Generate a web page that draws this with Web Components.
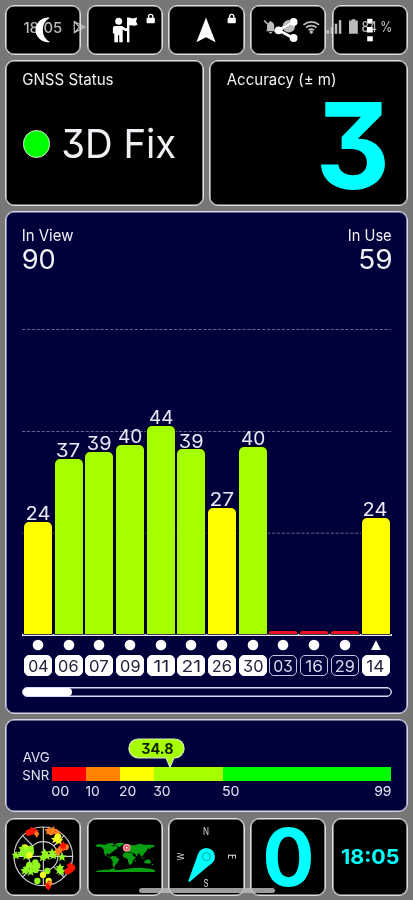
<!DOCTYPE html>
<html lang="en">
<head>
<meta charset="utf-8">
<title>GNSS Status</title>
<style>
    html, body { margin: 0; height: 100%; }
    body {
        background: #777775;
        font-family: Inter, "Liberation Sans", sans-serif;
        color: #f1f1f5;
    }
</style>
</head>
<body>
<gnss-app></gnss-app>

<script>
class BaseElement extends HTMLElement {

    constructor(){
        super();
        this.shadowObj = this.attachShadow({mode:'open'});
    }

    connectedCallback(){
        this.render();
    }

    render(){
        this.shadowObj.innerHTML = this.getTemplate() + this.getStyle();
    }

    getTemplate(){
        return '<slot></slot>';
    }

    getStyle(){
        return '';
    }

    num(name, fallback){
        return this.hasAttribute(name) ? parseFloat(this.getAttribute(name)) : fallback;
    }
}

// one line of text: "w" is the drawn width, "cap" the height of the capitals
class FitText extends BaseElement {

    getTemplate(){
        const text = this.getAttribute('text');
        const w = this.num('w', 20);
        const cap = this.num('cap', 11);
        const weight = this.getAttribute('weight') || 400;
        const size = cap / 0.727;

        const ctx = document.createElement('canvas').getContext('2d');
        ctx.font = `${weight} ${size * 10}px Inter, "Liberation Sans", sans-serif`;
        const m = ctx.measureText(text);
        const left = m.actualBoundingBoxLeft / 10;
        const ink = left + m.actualBoundingBoxRight / 10;

        return `
            <svg width="${w}" height="${cap}">
                <text x="${left}" y="${cap}" transform="scale(${w / ink} 1)"
                    font-size="${size}" font-weight="${weight}" fill="currentColor">${text}</text>
            </svg>
        `;
    }

    getStyle(){
        return `
        <style>
            :host { display: block; flex: none; }
            svg { display: block; overflow: visible; }
            text { font-feature-settings: "cv09"; }
        </style>
        `
    }
}

// bordered card, everything on the screen sits in one
class PanelCard extends BaseElement {

    getStyle(){
        return `
        <style>
            :host {
                display: flex;
                box-sizing: border-box;
                min-width: 0;
                border: 1px solid #dedee2;
                border-radius: 9px;
                background: #000;
                box-shadow: inset 0 0 0 .6px #dedee2;
            }
            :host([navy]) {
                border-color: #d6d6ea;
                background: #00003b;
                box-shadow: inset 0 0 0 .6px #d6d6ea;
            }
            :host([center]) { align-items: center; justify-content: center; }
        </style>
        `
    }
}

const LOCK = `
    <rect x="21.6" y="-12.2" width="8.2" height="5.4" rx=".8"/>
    <path d="M23.6-12v-1.6a2.1 2.1 0 0 1 4.2 0v1.6" fill="none" stroke="#fff" stroke-width="1.3"/>`;

// the origin of every icon is the centre of its tile
const ICONS = {
    moon: `<path d="M7-12.2A12.3 12.3 0 1 0 7 12A13.8 13.8 0 0 1 7-12.2z"/>`,
    guide: `
        <circle cx="-6.3" cy="-8.8" r="3.5"/>
        <path d="M-10.2-4h7.4l3.6 2.6 1.8-1v2.8l-2 .9-2.9-1.7V12.2h-3.5V5.2h-1.2v7h-3.7V3.6h-1.4v-5.8q0-1.8 1.9-1.8z"/>
        <path d="M2-12.6h2.3l3.4 1.1 4.6-1.1-1.2 3.8 1.4 3.6q-2.5 1.3-4.6.8-1.9-.8-3.5-.2V12.2H2z"/>${LOCK}`,
    arrow: `<path d="M0-12.6L9.6 12.2 0 7.3-9.6 12.2z"/>${LOCK}`,
    share: `
        <path d="M5.5-8.2L-9.3.3 5.5 8.2" fill="none" stroke="#fff" stroke-width="2.8"/>
        <circle cx="5.6" cy="-8" r="3.9"/><circle cx="-9.4" cy=".3" r="3.9"/><circle cx="5.6" cy="8" r="3.9"/>`,
    more: `
        <rect x="-2.8" y="-11.2" width="5.3" height="4.8"/>
        <rect x="-3" y="-3" width="5.8" height="5.5"/>
        <rect x="-2.8" y="6.3" width="5.6" height="5"/>`
};

class ToolIcon extends BaseElement {

    getTemplate(){
        return `<svg width="72" height="46" viewBox="-36 -23 72 46" fill="#fff">${ICONS[this.getAttribute('name')]}</svg>`;
    }

    getStyle(){
        return `
        <style>
            :host { display: block; }
            svg { display: block; }
        </style>
        `
    }
}

class FixStatus extends BaseElement {

    getTemplate(){
        return `
            <fit-text text="GNSS Status" w="90" cap="11.3"></fit-text>
            <div class="fix">
                <span class="lamp"></span>
                <fit-text text="3D Fix" w="112" cap="29.2"></fit-text>
            </div>
        `;
    }

    getStyle(){
        return `
        <style>
            :host { display: block; padding: 12.8px 16.8px; }
            .fix { display: flex; align-items: center; gap: 13px; margin-top: 44.3px; }
            .lamp {
                box-sizing: border-box;
                width: 27.5px;
                height: 27.5px;
                border: 1px solid #d8ecd8;
                border-radius: 50%;
                background: #00fe00;
            }
        </style>
        `
    }
}

class AccuracyView extends BaseElement {

    getTemplate(){
        return `
            <fit-text text="Accuracy (± m)" w="108" cap="11.3"></fit-text>
            <fit-text class="value" text="3" w="65" cap="87" weight="700"></fit-text>
        `;
    }

    getStyle(){
        return `
        <style>
            :host { display: flex; flex: 1; flex-direction: column; padding: 12.8px 20.8px 0 17px; }
            .value { align-self: flex-end; margin-top: 17.2px; color: #00ffff; }
        </style>
        `
    }
}

const SATS = [
    {id: '04', w: 18.5, snr: 24, h: 112.5},
    {id: '06', w: 18.5, snr: 37, h: 175.5},
    {id: '07', w: 18, snr: 39, h: 182.3},
    {id: '09', w: 18.5, snr: 40, h: 189.2},
    {id: '11', w: 13.5, snr: 44, h: 208},
    {id: '21', w: 16.5, snr: 39, h: 184.6},
    {id: '26', w: 18, snr: 27, h: 126},
    {id: '30', w: 18.5, snr: 40, h: 187},
    {id: '03', w: 18, h: 3},
    {id: '16', w: 16, h: 3},
    {id: '29', w: 18, h: 3},
    {id: '14', w: 16.5, snr: 24, h: 116.5, other: true}
];

class SatBar extends BaseElement {

    getTemplate(){
        const snr = this.getAttribute('snr');
        const color = !snr ? '#e81226' : snr < 30 ? '#ffff00' : '#a6ff00';
        return `
            ${snr ? `<fit-text text="${snr}" w="22.3" cap="13.4"></fit-text>` : ''}
            <div class="bar" style="height:${this.num('h', 0)}px;background:${color}"></div>
        `;
    }

    getStyle(){
        return `
        <style>
            :host {
                display: flex;
                flex-direction: column;
                align-items: center;
                justify-content: flex-end;
                gap: 1.6px;
                color: #e9e9f8;
            }
            .bar {
                width: 28px;
                border-radius: 5px 5px 0 0;
                box-shadow: 0 0 0 .8px #000014;
            }
            :host(:not([snr])) .bar { border-radius: 2px 2px 0 0; }
        </style>
        `
    }
}

class SatTag extends BaseElement {

    getTemplate(){
        const other = this.hasAttribute('other');
        return `
            <svg width="12" height="12" viewBox="-6 -6 12 12" fill="#fff">
                ${other ? '<path d="M0-4.8L5 5H-5z"/>' : '<circle r="5.3"/>'}
            </svg>
            <div class="tag"><fit-text text="${this.getAttribute('sat')}" w="${this.num('w', 18)}" cap="11.8"></fit-text></div>
        `;
    }

    getStyle(){
        return `
        <style>
            :host {
                display: flex;
                flex-direction: column;
                align-items: center;
                gap: 4.5px;
            }
            svg { display: block; }
            .tag {
                box-sizing: border-box;
                display: flex;
                align-items: center;
                justify-content: center;
                width: 28px;
                height: 21px;
                border: 1px solid #fff;
                border-radius: 5px;
                background: #fff;
                color: #22223c;
            }
            :host([idle]) .tag { border-color: #c4c4e0; background: none; color: #d8d8ee; }
        </style>
        `
    }
}

class SatChart extends BaseElement {

    getTemplate(){
        const bars = SATS.map(s => `<sat-bar ${s.snr ? `snr="${s.snr}"` : ''} h="${s.h}"></sat-bar>`).join('');
        const tags = SATS.map(s => `<sat-tag sat="${s.id}" w="${s.w}" ${s.snr ? '' : 'idle'} ${s.other ? 'other' : ''}></sat-tag>`).join('');
        return `
            <header>
                <div>
                    <fit-text text="In View" w="50" cap="11.5"></fit-text>
                    <fit-text text="90" w="31.3" cap="19.2"></fit-text>
                </div>
                <div class="right">
                    <fit-text text="In Use" w="42" cap="11.5"></fit-text>
                    <fit-text text="59" w="31" cap="19.2"></fit-text>
                </div>
            </header>
            <div class="plot">
                <svg class="lines" width="369" height="305">
                    <path d="M0 .5H369M0 102.5H369M0 204.2H369"/>
                </svg>
                <div class="bars">${bars}</div>
            </div>
            <div class="tags">${tags}</div>
            <div class="scroll"><span></span></div>
        `;
    }

    getStyle(){
        return `
        <style>
            :host { display: flex; flex: 1; flex-direction: column; padding: 17.3px 15.5px 0 16px; }
            header { display: flex; justify-content: space-between; height: 99.7px; padding: 0 1px 0 .8px; }
            header div { display: flex; flex-direction: column; gap: 8.9px; }
            .right { align-items: flex-end; }
            .plot { display: grid; height: 304.7px; border-bottom: 2px solid #ececf8; }
            .plot > * { grid-area: 1 / 1; }
            .lines { stroke: #62628e; stroke-width: 1; stroke-dasharray: 3.2 1.7; }
            .bars, .tags {
                display: grid;
                grid-template-columns: repeat(12, 30.7px);
                padding-left: .6px;
            }
            .tags { margin-top: 2.8px; }
            .scroll {
                box-sizing: border-box;
                height: 10px;
                margin-top: 11px;
                border: 1px solid #dcdcf0;
                border-radius: 5px;
                box-shadow: inset 0 0 0 .4px #dcdcf0;
            }
            .scroll span { display: block; width: 49px; height: 8px; border-radius: 4px; background: #fff; }
        </style>
        `
    }
}

class SnrScale extends BaseElement {

    getTemplate(){
        return `
            <div class="title">
                <fit-text text="AVG" w="26" cap="9.8"></fit-text>
                <fit-text text="SNR" w="26" cap="9.8"></fit-text>
            </div>
            <div class="scale">
                <svg class="bubble" width="58" height="31" viewBox="0 0 58 31">
                    <path d="M10.3 1H46.7A9.4 9.4 0 0 1 46.7 19.8H46L42 29.2 38 19.8H10.3A9.4 9.4 0 0 1 10.3 1z"/>
                </svg>
                <fit-text class="avg" text="34.8" w="31" cap="10.6" weight="700"></fit-text>
                <div class="segments"><i></i><i></i><i></i><i></i><i></i></div>
                <div class="marks">
                    <fit-text text="00" w="16.5" cap="10"></fit-text>
                    <fit-text text="10" w="13" cap="10"></fit-text>
                    <fit-text text="20" w="15.5" cap="10"></fit-text>
                    <fit-text text="30" w="15.8" cap="10"></fit-text>
                    <fit-text text="50" w="15.8" cap="10"></fit-text>
                    <fit-text text="99" w="15.8" cap="10"></fit-text>
                </div>
            </div>
        `;
    }

    getStyle(){
        return `
        <style>
            :host { display: flex; flex: 1; gap: 3.2px; padding: 0 15.8px 0 16.6px; color: #e4e4f4; }
            .title { display: flex; flex-direction: column; gap: 7.6px; padding-top: 32.4px; }
            .scale { position: relative; width: 339px; padding-top: 47.6px; }
            .segments { display: grid; grid-template-columns: 34px 34px 34px 69px 168px; height: 13.5px; }
            .segments i:nth-child(1) { background: #ff0000; }
            .segments i:nth-child(2) { background: #ff8200; }
            .segments i:nth-child(3) { background: #ffff00; }
            .segments i:nth-child(4) { background: #a6ff00; }
            .segments i:nth-child(5) { background: #00ff00; }
            .marks {
                display: grid;
                grid-template-columns: 34px 34px 34px 69px 1fr auto;
                margin-top: 4.6px;
                padding-left: .4px;
            }
            .bubble { position: absolute; left: 76.5px; top: 17.8px; fill: #a6ff00; stroke: #d9efb9; stroke-width: 1.2; }
            .avg { position: absolute; left: 89.8px; top: 23px; color: #10200a; }
        </style>
        `
    }
}

// markers as x, y, shape (c circle, s star, d diamond), colour
const SKY = [
    [86,60,'c','r'],[103,56,'s','r'],[110,63,'d','o'],[95,52,'d','r'],
    [146,54,'s','o'],[153,58,'c','o'],[160,53,'s','o'],[171,62,'s','o'],
    [174,72,'c','y'],[166,80,'s','y'],[177,84,'s','y'],
    [197,103,'c','o'],[185,106,'s','r'],[179,112,'s','o'],[172,119,'c','o'],[190,98,'s','r'],
    [48,128,'s','g'],[75,104,'c','y'],[72,118,'c','g'],[85,113,'s','g'],[93,119,'c','g'],
    [78,130,'s','g'],[88,128,'c','y'],[64,122,'s','g'],[68,108,'s','g'],[92,108,'c','g'],
    [134,121,'s','g'],[128,134,'s','g'],[141,130,'s','g'],[156,120,'s','g'],[160,128,'s','g'],[186,133,'s','g'],
    [106,149,'c','g'],[88,157,'c','g'],[80,167,'s','g'],[100,163,'s','g'],[112,159,'c','g'],
    [92,177,'s','g'],[107,172,'c','g'],[74,174,'s','g'],
    [142,175,'c','g'],[129,187,'c','y'],[112,205,'c','g'],[146,205,'c','y'],
    [145,216,'s','r'],[150,212,'d','o'],[145,222,'d','r'],
    [178,172,'s','g'],[184,176,'s','g'],[180,165,'s','g'],
    [211,160,'s','r'],[210,171,'c','r'],[203,176,'c','r'],[216,166,'c','r']
];
const SKY_COLORS = {r: '#ff1400', o: '#ff7c1c', y: '#f0ff22', g: '#92f820'};

class SkyPlot extends BaseElement {

    getMarker([x, y, shape, color]){
        const fill = SKY_COLORS[color];
        if(shape == 'c') return `<circle cx="${x}" cy="${y}" r="9.5" fill="${fill}"/>`;
        const d = shape == 'd' ? 'M0-10L8 0 0 12-8 0z' : 'M0-14L4-5 13-4 6 3 9 12 0 7-9 12-6 3-13-4-4-5z';
        return `<path d="${d}" transform="translate(${x} ${y})" fill="${fill}"/>`;
    }

    getTemplate(){
        return `
            <svg width="72" height="74" viewBox="21 22 216 222">
                <g fill="none" stroke="#cfcfcf" stroke-width="3.4">
                    <circle cx="130" cy="131" r="88"/>
                    <circle cx="130" cy="131" r="44"/>
                    <path d="M130 43V219M42 131H218M68 69L99 100M161 100L192 69M68 193L99 162M161 162L192 193"/>
                </g>
                ${SKY.map(m => this.getMarker(m)).join('')}
            </svg>
        `;
    }

    getStyle(){
        return `<style>:host, svg { display: block; }</style>`
    }
}

class WorldMap extends BaseElement {

    getTemplate(){
        return `
            <svg width="72" height="74" viewBox="266 22 216 222" fill="#08a010">
                <path d="M285 98L294 94 312 96 326 95 338 101 346 98 353 106 345 111 336 118 330 122 328 126 323 122 317 125 321 131 329 133 335 137 328 135 316 129 311 121 310 110 302 103 290 103z"/>
                <path d="M316 93L334 91 344 95 337 98 322 97zM343 94L358 90 373 92 365 98 357 104 349 99z"/>
                <path d="M334 130L345 131 357 140 351 151 344 158 341 166 337 160 337 146 331 137z"/>
                <path d="M372 109L379 102 388 96 402 98 417 93 433 96 451 96 466 99 458 104 451 105 449 110 443 107 439 115 433 121 427 129 424 134 420 126 414 121 409 132 404 123 396 119 401 126 391 119 381 117 373 119z"/>
                <path d="M371 122L379 119 394 122 401 132 408 133 399 142 396 151 389 158 384 150 382 139 370 134 366 128z"/>
                <path d="M432 145L440 141 446 139 453 150 445 153 432 151zM422 133L429 137 437 140 426 138zM453 154L459 155 456 159zM404 141L407 144 403 150zM454 137l6 3-5 0z"/>
                <path d="M286 177L291 174 310 171 326 171 334 168 343 166 343 171 357 172 377 169 399 166 423 165 449 168 463 171 464 178 286 178z"/>
                <circle cx="379" cy="105" r="9" fill="#d34852" stroke="#ff8d93" stroke-width="5"/>
                <circle cx="379" cy="105" r="3" fill="#fff"/>
            </svg>
        `;
    }

    getStyle(){
        return `<style>:host, svg { display: block; }</style>`
    }
}

class CompassDial extends BaseElement {

    getTemplate(){
        return `
            <svg width="72" height="74" viewBox="22 22 216 222">
                <g fill="#d8d8d8" font-size="32" text-anchor="middle">
                    <text transform="translate(130 66) scale(.75 1)">N</text>
                    <text transform="translate(130 222) scale(.75 1)">S</text>
                    <text transform="translate(64 132) rotate(-90) scale(.75 .9)">W</text>
                    <text transform="translate(197 132) rotate(90) scale(.85 .98)">E</text>
                </g>
                <path d="M106 124L77 205Q78 210 83 206L149 150z" fill="#00ffff"/>
                <circle cx="131" cy="132" r="26" fill="#00ffff"/>
                <circle cx="131" cy="132" r="12" fill="none" stroke="#078f94" stroke-width="2.4"/>
            </svg>
        `;
    }

    getStyle(){
        return `<style>:host, svg { display: block; }</style>`
    }
}

class StatusBar extends BaseElement {

    getTemplate(){
        return `
            <svg width="413" height="50">
                <g fill="none" stroke="#bcbcbc" stroke-width="1.2">
                    <path d="M74.3 21.5L84.6 27 74.3 32.8zM74.3 21.5L79.5 27 74.3 32.8M79.5 27H84"/>
                    <path d="M303.5 24.8a12 12 0 0 1 15.6 0M306 27.6a8 8 0 0 1 10.6 0M308.5 30.2a4.5 4.5 0 0 1 5.6 0" stroke-width="1.7"/>
                    <path d="M264 20.5L277 33.3" stroke-width="1.5"/>
                </g>
                <g fill="#bcbcbc">
                    <path d="M267 30.2v-4.4q.4-3.2 2.8-4v-.9h1.4v.9q2.8.8 3 4v3.5l1.2 1.9H265.6zM269 32h3a1.5 1.5 0 0 1-3 0z"/>
                    <circle cx="288.8" cy="26.3" r="6.2"/>
                    <circle cx="311.3" cy="32" r="1.7"/>
                    <rect x="326.5" y="30" width="2.5" height="3.8"/>
                    <rect x="330.6" y="27" width="2.5" height="6.8"/>
                    <rect x="334.7" y="23.7" width="2.5" height="10.1"/>
                    <rect x="338.8" y="20.2" width="2.5" height="13.6"/>
                    <path d="M350 20.5h1.6v-1.3h3.8v1.3h2.4v13.2H349V20.5z"/>
                </g>
            </svg>
            <fit-text class="time" text="18:05" w="37.5" cap="10.5" weight="500"></fit-text>
            <fit-text class="level" text="84 %" w="29" cap="10.3" weight="500"></fit-text>
        `;
    }

    getStyle(){
        return `
        <style>
            :host {
                position: absolute;
                inset: 0 0 auto;
                display: block;
                color: #bcbcbc;
                mix-blend-mode: lighten;
            }
            svg { display: block; }
            .time { position: absolute; left: 24px; top: 21.7px; }
            .level { position: absolute; left: 361.5px; top: 22.3px; }
        </style>
        `
    }
}

class GnssApp extends BaseElement {

    getTemplate(){
        const tools = ['moon', 'guide', 'arrow', 'share', 'more'];
        return `
            <div class="row five">
                ${tools.map(t => `<panel-card center><tool-icon name="${t}"></tool-icon></panel-card>`).join('')}
            </div>
            <div class="row two">
                <panel-card><fix-status></fix-status></panel-card>
                <panel-card><accuracy-view></accuracy-view></panel-card>
            </div>
            <panel-card navy><sat-chart></sat-chart></panel-card>
            <panel-card navy><snr-scale></snr-scale></panel-card>
            <div class="row five">
                <panel-card center><sky-plot></sky-plot></panel-card>
                <panel-card center><world-map></world-map></panel-card>
                <panel-card center><compass-dial></compass-dial></panel-card>
                <panel-card center class="cyan"><fit-text text="0" w="47" cap="57.5" weight="700"></fit-text></panel-card>
                <panel-card center class="cyan"><fit-text text="18:05" w="56.5" cap="14.8" weight="700"></fit-text></panel-card>
            </div>
            <status-bar></status-bar>
            <div class="home"></div>
        `;
    }

    getStyle(){
        return `
        <style>
            :host {
                position: relative;
                box-sizing: border-box;
                display: grid;
                grid-template-rows: 49.5px 146px 502.5px 93.5px 78px;
                gap: 5.3px;
                width: 413px;
                height: 900px;
                padding: 5px 5px 0;
                overflow: hidden;
            }
            .row { display: grid; gap: 5.3px; }
            .five { grid-template-columns: repeat(5, 1fr); }
            .two { grid-template-columns: 1fr 1fr; }
            .cyan { color: #00ffff; }
            .home {
                position: absolute;
                left: 139px;
                top: 888px;
                width: 135.5px;
                height: 4.5px;
                border-radius: 3px;
                background: rgba(190, 190, 190, .82);
            }
        </style>
        `
    }
}

customElements.define('fit-text', FitText);
customElements.define('panel-card', PanelCard);
customElements.define('tool-icon', ToolIcon);
customElements.define('fix-status', FixStatus);
customElements.define('accuracy-view', AccuracyView);
customElements.define('sat-bar', SatBar);
customElements.define('sat-tag', SatTag);
customElements.define('sat-chart', SatChart);
customElements.define('snr-scale', SnrScale);
customElements.define('sky-plot', SkyPlot);
customElements.define('world-map', WorldMap);
customElements.define('compass-dial', CompassDial);
customElements.define('status-bar', StatusBar);
customElements.define('gnss-app', GnssApp);
</script>
</body>
</html>
